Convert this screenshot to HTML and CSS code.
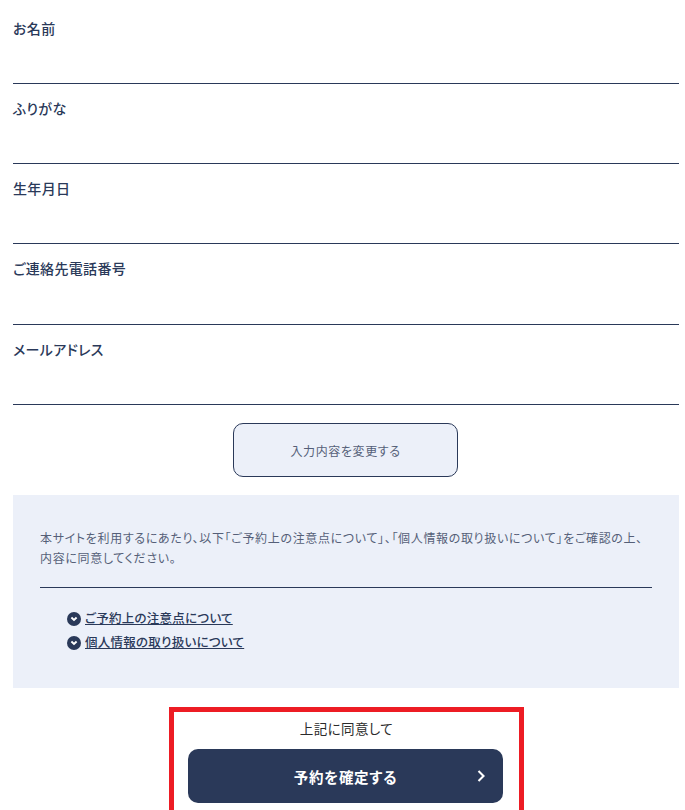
FILE: index.html
```html
<!DOCTYPE html>
<html lang="ja">
<head>
  <meta charset="UTF-8" />
  <meta name="viewport" content="width=device-width, initial-scale=1.0"/>
  <title>予約内容の確認</title>
  <link rel="stylesheet" href="styles.css">
</head>
<body>

  <div class="form-row"><div class="form-label">お名前</div></div>
  <div class="form-row"><div class="form-label">ふりがな</div></div>
  <div class="form-row"><div class="form-label">生年月日</div></div>
  <div class="form-row form-row-tall"><div class="form-label">ご連絡先電話番号</div></div>
  <div class="form-row"><div class="form-label">メールアドレス</div></div>

  <button class="change-button">入力内容を変更する</button>

  <div class="agree-panel">
    <p class="agree-text">本サイトを利用するにあたり、以下「ご予約上の注意点について」、「個人情報の取り扱いについて」をご確認の上、内容に同意してください。</p>
    <div class="agree-links">
      <a class="agree-link" href="#">
        <svg class="link-icon" viewBox="0 0 14 14"><circle cx="7" cy="7" r="7" fill="#2a3959"/><path d="M4.4 5.6 7 7.9 9.6 5.6" fill="none" stroke="#fff" stroke-width="2"/></svg>
        <span>ご予約上の注意点について</span>
      </a>
      <a class="agree-link" href="#">
        <svg class="link-icon" viewBox="0 0 14 14"><circle cx="7" cy="7" r="7" fill="#2a3959"/><path d="M4.4 5.6 7 7.9 9.6 5.6" fill="none" stroke="#fff" stroke-width="2"/></svg>
        <span>個人情報の取り扱いについて</span>
      </a>
    </div>
  </div>

  <div class="confirm-box">
    <div class="confirm-note">上記に同意して</div>
    <button class="confirm-button">
      <span>予約を確定する</span>
      <svg class="confirm-arrow" viewBox="0 0 8 12"><path d="M1.5 1 6.5 6 1.5 11" fill="none" stroke="#fff" stroke-width="2.1"/></svg>
    </button>
  </div>

</body>
</html>
```

FILE: styles.css
```css
body {
  font-family: "Noto Sans CJK JP", "Noto Sans", sans-serif;
  font-feature-settings: "palt";
  color: #2a3959;
  background-color: white;
  margin: 0;
  padding: 0 6px 0 13px;
  overflow: hidden;
}

.form-row {
  height: 80px;
  border-bottom: 1px solid #2a3959;
  box-sizing: border-box;
  padding-top: 14px;
}

.form-row:first-child {
  height: 84px;
  padding-top: 18px;
}

.form-row-tall {
  height: 81px;
}

.form-label {
  font-size: 14px;
  line-height: 20px;
  font-weight: 500;
  letter-spacing: 0.025em;
}

.change-button {
  display: block;
  width: 225px;
  height: 54px;
  margin: 18px auto 18px 220px;
  background-color: #ecf0f9;
  border: 1px solid #2a3959;
  border-radius: 10px;
  font-family: inherit;
  font-feature-settings: inherit;
  font-size: 12px;
  color: #555f78;
  letter-spacing: 0.05em;
}

.agree-panel {
  background-color: #ecf0f9;
  height: 193px;
  box-sizing: border-box;
  padding: 33px 27px 0;
}

.agree-text {
  margin: 0;
  padding-bottom: 19px;
  border-bottom: 1px solid #2a3959;
  font-size: 12px;
  line-height: 20px;
  color: #555f78;
  letter-spacing: 0.055em;
}

.agree-links {
  padding: 17px 0 0 27px;
}

.agree-link {
  display: flex;
  align-items: center;
  gap: 4px;
  height: 24px;
  color: #2a3959;
  font-size: 12.5px;
  font-weight: 500;
  letter-spacing: 0.02em;
}

.link-icon {
  width: 14px;
  height: 14px;
  margin-top: 4px;
}

.confirm-box {
  width: 355px;
  margin: 19px 0 0 156px;
  box-sizing: border-box;
  border: 5px solid #ed1c24;
  padding: 0 14px;
  height: 108px;
}

.confirm-note {
  text-align: center;
  font-size: 13.5px;
  line-height: 20px;
  padding: 6px 0 11px;
  color: #2b2b2b;
  letter-spacing: 0.03em;
}

.confirm-button {
  position: relative;
  display: block;
  width: 315px;
  height: 54px;
  background-color: #2a3959;
  border: none;
  border-radius: 10px;
  color: white;
  font-family: inherit;
  font-feature-settings: inherit;
  font-size: 14.5px;
  font-weight: 700;
  letter-spacing: 0.05em;
}

.confirm-arrow {
  position: absolute;
  right: 18px;
  top: 21px;
  width: 8px;
  height: 12px;
}
```
